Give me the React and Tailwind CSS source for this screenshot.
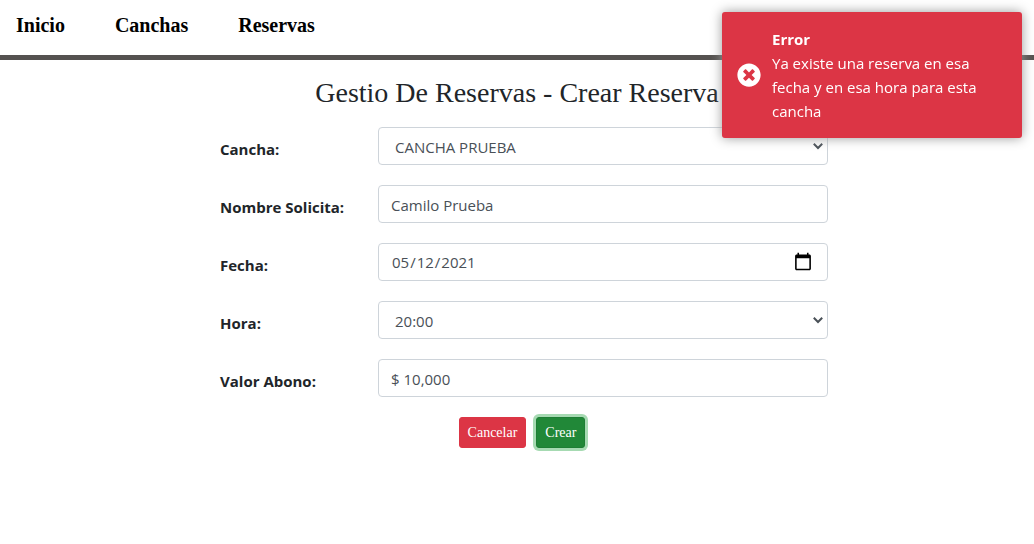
import { useState } from "react";

const fieldClass =
  "block h-[38px] w-full rounded border border-[#ced4da] bg-white font-['Open_Sans',sans-serif] text-[15px] leading-6 text-[#495057]";

function Row({ id, label, children }) {
  return (
    <div className="flex items-center">
      <label
        htmlFor={id}
        className="w-[158px] shrink-0 pt-[6px] font-['Open_Sans',sans-serif] text-[15px] font-bold leading-6 text-[#212529]"
      >
        {label}
      </label>
      <div className="min-w-0 flex-1">{children}</div>
    </div>
  );
}

function Chevron() {
  return (
    <svg
      className="pointer-events-none absolute right-1 top-1/2 h-3 w-3 -translate-y-1/2"
      viewBox="0 0 12 12"
      fill="none"
      stroke="#495057"
      strokeWidth="2"
      aria-hidden="true"
    >
      <path d="M1.8 3.8 6 8l4.2-4.2" />
    </svg>
  );
}

function Select({ id, value }) {
  return (
    <div className="relative">
      <select id={id} className={`${fieldClass} appearance-none pl-4 pr-6 pt-[2px]`}>
        <option>{value}</option>
      </select>
      <Chevron />
    </div>
  );
}

function Toast() {
  return (
    <div
      role="alert"
      className="fixed right-3 top-3 flex w-[300px] items-center gap-[11px] rounded-[3px] bg-[#dc3545] p-[15px] font-['Open_Sans',sans-serif] text-[15px] leading-6 text-white shadow-[0_0_12px_#999999]"
    >
      <svg className="h-6 w-6 shrink-0" viewBox="0 0 512 512" fill="currentColor" aria-hidden="true">
        <path d="M256 8C119 8 8 119 8 256s111 248 248 248 248-111 248-248S393 8 256 8zm121.600 313.100c4.700 4.700 4.700 12.300 0 17L338 377.600c-4.700 4.700-12.300 4.700-17 0L256 312l-65.100 65.600c-4.700 4.700-12.300 4.700-17 0L134.400 338c-4.700-4.700-4.700-12.300 0-17l65.600-65-65.600-65.100c-4.700-4.700-4.700-12.300 0-17l39.600-39.600c4.700-4.700 12.300-4.700 17 0l65 65.700 65.100-65.600c4.700-4.700 12.300-4.700 17 0l39.600 39.600c4.700 4.700 4.700 12.300 0 17L312 256l65.600 65.100z" />
      </svg>
      <div className="min-w-0 flex-1">
        <div className="font-bold">Error</div>
        <div>Ya existe una reserva en esa fecha y en esa hora para esta cancha</div>
      </div>
    </div>
  );
}

export default function App() {
  const [name, setName] = useState("Camilo Prueba");
  const [date, setDate] = useState("2021-05-12");
  const [deposit, setDeposit] = useState("$ 10,000");

  return (
    <div className="min-h-screen bg-white font-['Liberation_Serif',serif] text-[#212529]">
      <nav className="flex gap-[50px] border-b-[5px] border-[#555250] px-4 pb-[15px] pt-[11px] text-[20px] font-bold leading-[29px] text-black">
        <a href="#inicio">Inicio</a>
        <a href="#canchas">Canchas</a>
        <a href="#reservas">Reservas</a>
      </nav>

      <main className="mx-auto max-w-[622px] pt-4">
        <h1 className="text-center text-[28px] leading-[34px]">Gestio De Reservas - Crear Reserva</h1>
        <form className="flex flex-col gap-5 pl-[14px] pt-[17px]" onSubmit={(e) => e.preventDefault()}>
          <Row id="cancha" label="Cancha:">
            <Select id="cancha" value="CANCHA PRUEBA" />
          </Row>
          <Row id="nombre" label="Nombre Solicita:">
            <input
              id="nombre"
              type="text"
              className={`${fieldClass} px-3 pt-[2px]`}
              value={name}
              onChange={(e) => setName(e.target.value)}
            />
          </Row>
          <Row id="fecha" label="Fecha:">
            <input
              id="fecha"
              type="date"
              className={`${fieldClass} px-3 [&::-webkit-calendar-picker-indicator]:h-5 [&::-webkit-calendar-picker-indicator]:w-5`}
              value={date}
              onChange={(e) => setDate(e.target.value)}
            />
          </Row>
          <Row id="hora" label="Hora:">
            <Select id="hora" value="20:00" />
          </Row>
          <Row id="abono" label="Valor Abono:">
            <input
              id="abono"
              type="text"
              className={`${fieldClass} px-3 pt-[2px]`}
              value={deposit}
              onChange={(e) => setDeposit(e.target.value)}
            />
          </Row>
          <div className="flex justify-center gap-[10px] pr-1 text-[14px] leading-[21px] text-white">
            <button type="button" className="rounded-[3px] border border-[#dc3545] bg-[#dc3545] px-2 py-1">
              Cancelar
            </button>
            <button
              type="submit"
              className="rounded-[3px] border border-[#1e7e34] bg-[#218838] px-2 py-1 shadow-[0_0_0_3px_#a6dab2]"
            >
              Crear
            </button>
          </div>
        </form>
      </main>

      <Toast />
    </div>
  );
}
